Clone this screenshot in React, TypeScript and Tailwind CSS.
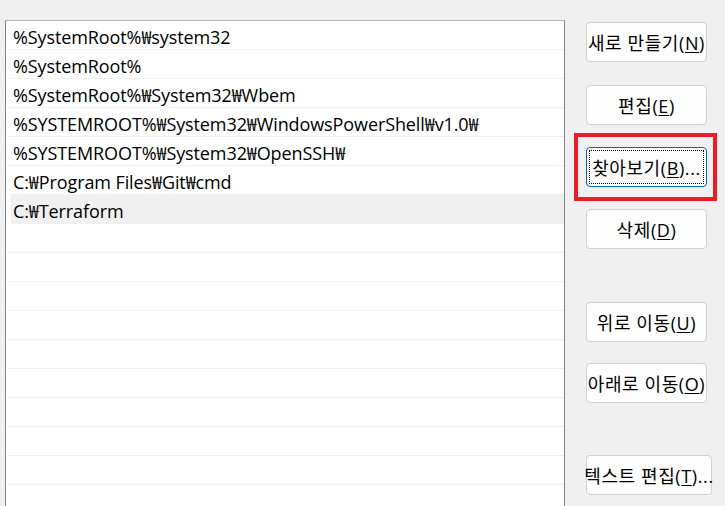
import React from 'react'

const paths = [
  '%SystemRoot%₩system32',
  '%SystemRoot%',
  '%SystemRoot%₩System32₩Wbem',
  '%SYSTEMROOT%₩System32₩WindowsPowerShell₩v1.0₩',
  '%SYSTEMROOT%₩System32₩OpenSSH₩',
  'C:₩Program Files₩Git₩cmd',
  'C:₩Terraform',
]

const TOTAL_ROWS = 17
const SELECTED = 6

type Btn = { label: string; key: string; tail?: string; top: string; wide?: boolean; focused?: boolean }

const buttons: Btn[] = [
  { label: '새로 만들기', key: 'N', top: 'mt-[22px]' },
  { label: '편집', key: 'E', top: 'mt-[23px]' },
  { label: '찾아보기', key: 'B', tail: '...', top: 'mt-[22px]', focused: true },
  { label: '삭제', key: 'D', top: 'mt-[22px]' },
  { label: '위로 이동', key: 'U', top: 'mt-[53px]' },
  { label: '아래로 이동', key: 'O', top: 'mt-[21px]' },
  { label: '텍스트 편집', key: 'T', tail: '...', top: 'mt-[52px]', wide: true },
]

const font = { fontFamily: '"Open Sans", "Noto Sans CJK KR", sans-serif' }

export default function App() {
  return (
    <div
      className="relative flex w-[725px] h-[506px] overflow-hidden bg-[#f0f0f0] text-[18px] text-black"
      style={font}
    >
      {/* path list */}
      <div className="ml-[5px] mt-[20px] w-[560px] h-[520px] shrink-0 bg-white border border-t-[#b4b4b4] border-l-[#82828c] border-r-[#82828c] border-b-[#82828c]">
        {Array.from({ length: TOTAL_ROWS }).map((_, i) => (
          <div
            key={i}
            className={`h-[29px] border-b border-[#f0f0f0] flex items-center pt-[3px] leading-none tracking-[-0.1px] ${
              i === SELECTED ? 'bg-[#f0f0f0] ml-[5px] pl-[2px]' : 'ml-[1px] pl-[6px]'
            }`}
          >
            {paths[i] ?? ''}
          </div>
        ))}
      </div>

      {/* buttons */}
      <div className="ml-[21px] flex flex-col">
        {buttons.map((b) => (
          <button
            key={b.key}
            className={`${b.top} ${b.wide ? 'w-[126px]' : 'w-[121px]'} h-[40px] rounded-[4px] bg-[#fdfdfd] flex items-center justify-center whitespace-nowrap leading-none tracking-[0.6px] ${
              b.focused ? 'border border-[#0067c0] p-[2px]' : 'border border-[#d0d0d0]'
            }`}
          >
            {b.focused ? (
              <span className="w-full h-full border border-dotted border-black flex items-center justify-center pt-[1px]">
                {b.label}(<span className="underline underline-offset-2">{b.key}</span>){b.tail}
              </span>
            ) : (
              <span className="pt-[1px]">
                {b.label}(<span className="underline underline-offset-2">{b.key}</span>){b.tail}
              </span>
            )}
          </button>
        ))}
      </div>

      {/* highlight box over the browse button */}
      <div className="absolute left-[574px] top-[133px] w-[143px] h-[68px] border-4 border-[#ed1c24] pointer-events-none" />
    </div>
  )
}
